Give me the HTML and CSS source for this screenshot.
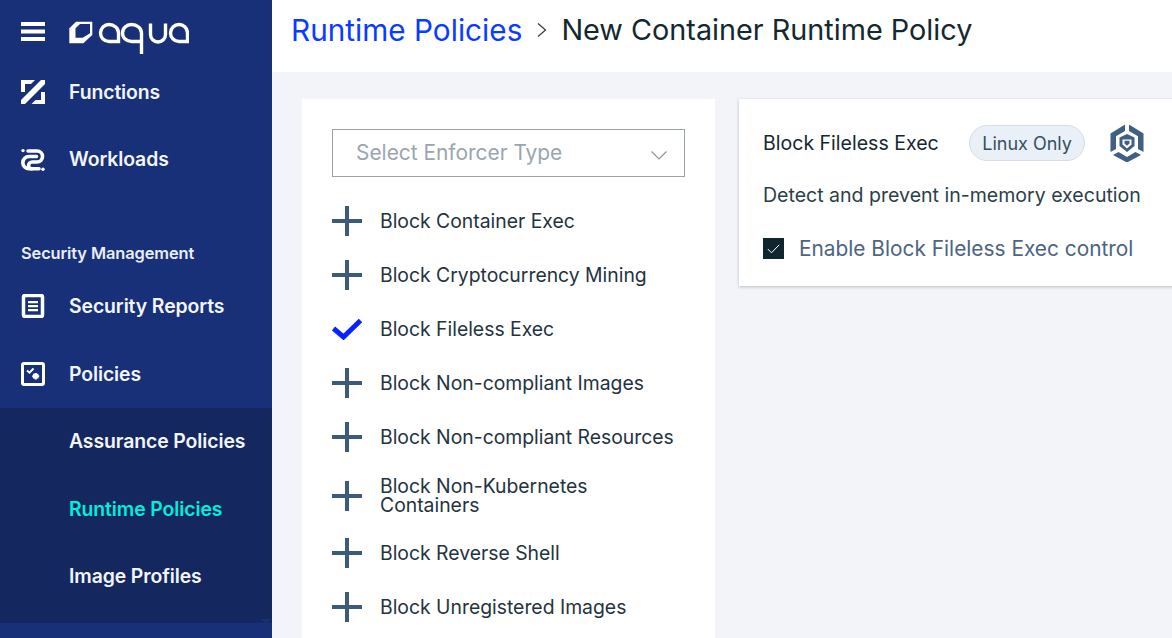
FILE: index.html
```html
<!DOCTYPE html>
<html lang="en">
<head>
<meta charset="utf-8">
<title>New Container Runtime Policy</title>
<link rel="stylesheet" href="styles.css">
</head>
<body>
<div class="app">
  <aside class="sidebar">
    <div class="brand">
      <svg class="burger" width="24" height="19" viewBox="0 0 24 19"><path d="M0 0h24v4H0zM0 7.500h24v4H0zM0 15h24v4H0z" fill="#fff"/></svg>
      <svg class="logo" width="120" height="34" viewBox="0 0 120 34" role="img" aria-label="aqua">
        <path d="M.3 7.300L7 .7H23.300V14L14.300 22.300H.3Z" fill="#fff"/>
        <path d="M6.500 7.300L11 3H21V12.300L13.700 16.800H6.500Z" fill="#173077"/>
        <g fill="none" stroke="#fff" stroke-width="3.400">
          <path d="M40 3.500a9.500 8.500 0 0 1 9.500 8.500v8.500H40a8.500 8.500 0 0 1 0-17z"/>
          <path d="M72.500 20.500H62.500a9 8.500 0 0 1 0-17a10 8.500 0 0 1 10 8.500V33"/>
          <path d="M81.500 2.500v11a7.500 7.500 0 0 0 15 0V2.500"/>
          <path d="M110 3.500a8.500 8.500 0 0 1 8.500 8.500v8.500H110a8.500 8.500 0 0 1 0-17z"/>
        </g>
      </svg>
    </div>
    <nav class="nav">
      <a class="nav-item">
        <svg class="nav-icon" width="24" height="24" viewBox="0 0 24 24"><path d="M0 0h14l-4 4H4v8H0zM24 0v4L4 24H0v-4L20 0zM24 24H10.500l4-4H20v-8h4z" fill="#fff"/></svg>
        <span>Functions</span>
      </a>
      <a class="nav-item">
        <svg class="nav-icon" width="24" height="24" viewBox="0 0 24 24"><g fill="none" stroke="#fff" stroke-width="3.600" stroke-linecap="round"><path d="M7 4h9a5.500 5.500 0 0 1 0 11h-5a3.400 3.400 0 0 0 0 6.800h7"/><path d="M15.500 9.500H8a6.100 6.100 0 0 0 0 12.300h3"/></g><circle cx="2" cy="3.600" r="1.700" fill="#fff"/><circle cx="22" cy="22.300" r="1.700" fill="#fff"/></svg>
        <span>Workloads</span>
      </a>
      <div class="nav-heading">Security Management</div>
      <a class="nav-item">
        <svg class="nav-icon" width="24" height="24" viewBox="0 0 24 24"><rect x="2.500" y="1.500" width="19" height="21" rx="1.500" fill="#173077" stroke="#fff" stroke-width="3.500"/><path d="M7 7h10v2.200H7zM7 11h10v2.200H7zM7 15h10v2.200H7z" fill="#fff"/></svg>
        <span>Security Reports</span>
      </a>
      <a class="nav-item">
        <svg class="nav-icon" width="24" height="24" viewBox="0 0 24 24"><rect x="1.500" y="1.500" width="21" height="21" rx="1.500" fill="#173077" stroke="#fff" stroke-width="3"/><path d="M6 8.500l2.500 2.200L12.500 6.500" fill="none" stroke="#fff" stroke-width="2"/><path d="M12 11.800h1.600v-.8h2.200v.8h1.600v1.400h.8v2h-.8v1.400h-1.600v.8h-2.200v-.8H12v-1.400h-.8v-2h.8z" fill="#fff"/></svg>
        <span>Policies</span>
      </a>
      <div class="subnav">
        <a class="nav-item sub">Assurance Policies</a>
        <a class="nav-item sub active">Runtime Policies</a>
        <a class="nav-item sub">Image Profiles</a>
        <svg class="scroll-mark" width="12" height="4" viewBox="0 0 12 4"><path d="M0 0h12L6 4z" fill="#173077"/></svg>
      </div>
    </nav>
  </aside>
  <main class="main">
    <header class="topbar">
      <a class="crumb">Runtime Policies</a>
      <svg class="crumb-sep" width="10" height="14" viewBox="0 0 10 14"><path d="M1 .5L8.500 7 1 13.500" fill="none" stroke="#33434f" stroke-width="1.300"/></svg>
      <h1 class="page-title">New Container Runtime Policy</h1>
    </header>
    <div class="content">
      <section class="controls">
        <div class="select">
          <span class="select-value">Select Enforcer Type</span>
          <svg width="16" height="9" viewBox="0 0 16 9"><path d="M.5.500L8 8 15.500.500" fill="none" stroke="#8d979f" stroke-width="1.200"/></svg>
        </div>
        <ul class="control-list">
          <li class="control"><svg class="plus" width="30" height="30" viewBox="0 0 30 30"><path d="M13 0h4v13h13v4H17v13h-4V17H0v-4h13z"/></svg><span>Block Container Exec</span></li>
          <li class="control"><svg class="plus" width="30" height="30" viewBox="0 0 30 30"><path d="M13 0h4v13h13v4H17v13h-4V17H0v-4h13z"/></svg><span>Block Cryptocurrency Mining</span></li>
          <li class="control"><svg class="tick" width="30" height="22" viewBox="0 0 30 22"><path d="M1.500 10.500L11.500 19 28.500 2.500" fill="none" stroke="#0a22ff" stroke-width="5"/></svg><span>Block Fileless Exec</span></li>
          <li class="control"><svg class="plus" width="30" height="30" viewBox="0 0 30 30"><path d="M13 0h4v13h13v4H17v13h-4V17H0v-4h13z"/></svg><span>Block Non-compliant Images</span></li>
          <li class="control"><svg class="plus" width="30" height="30" viewBox="0 0 30 30"><path d="M13 0h4v13h13v4H17v13h-4V17H0v-4h13z"/></svg><span>Block Non-compliant Resources</span></li>
          <li class="control wrapped"><svg class="plus" width="30" height="30" viewBox="0 0 30 30"><path d="M13 0h4v13h13v4H17v13h-4V17H0v-4h13z"/></svg><span>Block Non-Kubernetes Containers</span></li>
          <li class="control"><svg class="plus" width="30" height="30" viewBox="0 0 30 30"><path d="M13 0h4v13h13v4H17v13h-4V17H0v-4h13z"/></svg><span>Block Reverse Shell</span></li>
          <li class="control"><svg class="plus" width="30" height="30" viewBox="0 0 30 30"><path d="M13 0h4v13h13v4H17v13h-4V17H0v-4h13z"/></svg><span>Block Unregistered Images</span></li>
        </ul>
      </section>
      <section class="detail">
        <div class="detail-head">
          <h2 class="detail-title">Block Fileless Exec</h2>
          <span class="pill">Linux Only</span>
          <svg class="shield" width="34" height="38" viewBox="0 0 34 38"><path d="M15 .500V7L6 12.200V25L.5 28V9.500zM19 .500V7l9 5.200V25l5.500 3V9.500zM3 31l5.500-3L17 33l8.500-5 5.500 3-14 7.500z" fill="#3f5f83"/><path d="M9.500 13.500L17 10l7.500 3.500V22L17 28l-7.500-6z" fill="#3f5f83"/><path d="M12.500 15.500h9v5L17 24.500l-4.500-4z" fill="#fff"/><path d="M14.500 16.800h5v2.700L17 21.800l-2.500-2.300z" fill="#3f5f83"/></svg>
        </div>
        <p class="detail-desc">Detect and prevent in-memory execution</p>
        <label class="check-row">
          <span class="checkbox"><svg width="13" height="10" viewBox="0 0 13 10"><path d="M.8 5l3.700 3.800L12.200.8" fill="none" stroke="#fff" stroke-width="1"/></svg></span>
          <span>Enable Block Fileless Exec control</span>
        </label>
      </section>
    </div>
  </main>
</div>
</body>
</html>
```
FILE: styles.css
```css
* { box-sizing: border-box; }
html, body { margin: 0; height: 100%; overflow: hidden; }
body { font-family: Inter, "Noto Sans", sans-serif; background: #f2f4f9; color: #14282f; }
.app { display: flex; height: 638px; width: 1172px; overflow: hidden; }

.sidebar { flex: 0 0 272px; background: #173077; color: #fff; overflow: hidden; }
.brand { display: flex; align-items: flex-start; height: 58px; padding: 21px 0 0 21px; }
.burger { margin-top: 1px; margin-right: 24px; }
.nav { display: flex; flex-direction: column; }
.nav-item { display: flex; align-items: center; gap: 24px; height: 67.5px; padding-left: 21px; font-size: 19.4px; font-weight: 600; letter-spacing: -0.1px; color: #f2f5fb; }
.nav-icon { flex: none; }
.nav-heading { margin-top: 50.25px; height: 29.25px; line-height: 20px; padding-left: 21px; font-size: 16.4px; font-weight: 600; letter-spacing: -0.1px; color: #e9edf6; }
.subnav { position: relative; background: #14285f; padding-bottom: 13px; }
.nav-item.sub { padding-left: 69px; }
.nav-item.active { color: #00eedd; }
.scroll-mark { position: absolute; right: 0; bottom: 0; }

.main { flex: 1; min-width: 0; }
.topbar { display: flex; align-items: center; height: 72px; padding: 0 0 12px 19px; background: #fff; }
.crumb { font-size: 29.75px; color: #0a3cff; font-weight: 400; }
.crumb-sep { margin: 0 14px 0 15px; }
.page-title { margin: 0 0 1px; font-size: 28.8px; font-weight: 400; color: #14282f; }

.content { display: flex; align-items: flex-start; gap: 24px; padding: 27px 0 0 30px; width: 900px; }
.controls { flex: 0 0 413px; background: #fff; padding: 30px 30px 0; height: 560px; }
.select { display: flex; align-items: center; justify-content: space-between; height: 48px; width: 353px; padding: 0 17px 0 23px; border: 1px solid #9aa3a8; font-size: 20.9px; color: #9aa5b1; }
.select-value { margin-bottom: 1px; }
.select svg { margin-top: 5px; }
.control-list { list-style: none; margin: 17px 0 0; padding: 0; }
.control { display: flex; align-items: center; gap: 18px; min-height: 54px; padding: 12px 0; font-size: 19.38px; line-height: 19px; color: #1f343f; }
.control.wrapped { padding: 13px 0 11px; }
.control svg { flex: none; }
.plus { fill: #3e5a7a; }

.detail { flex: 0 0 460px; background: #fff; height: 187px; padding: 26px 24px 0; box-shadow: 0 1px 3px rgba(40, 50, 70, .28); }
.detail-head { display: flex; align-items: center; height: 36px; }
.detail-title { margin: 0 0 1px; font-size: 19.55px; font-weight: 400; color: #14282f; }
.pill { display: flex; align-items: center; height: 36px; margin-left: 30px; padding: 0 12.5px; border: 1px solid #d5dde6; border-radius: 18px; background: #eaf0f8; font-size: 18px; color: #33505f; }
.shield { margin-left: 25px; }
.detail-desc { margin: 23px 0 0; font-size: 19.55px; line-height: 22px; color: #2b3f49; }
.check-row { display: flex; align-items: center; gap: 15px; margin-top: 30px; font-size: 20.85px; color: #4b6582; }
.checkbox { display: flex; align-items: center; justify-content: center; width: 21px; height: 21px; background: #10262f; }
```
